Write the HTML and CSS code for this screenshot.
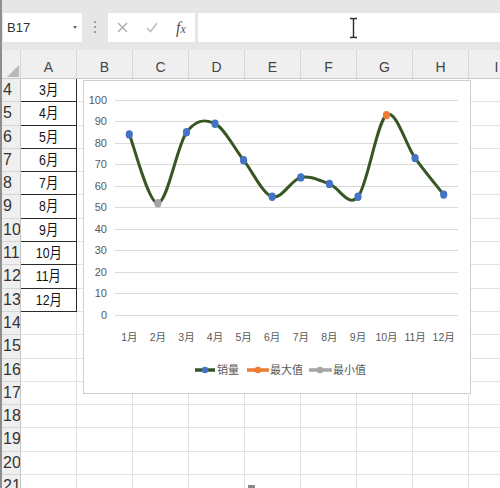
FILE: index.html
```html
<!DOCTYPE html>
<html lang="zh">
<head>
<meta charset="utf-8">
<title>Excel 折线图</title>
<link rel="stylesheet" href="styles.css">
</head>
<body>
<div class="app">
  <div class="toolbar">
    <div class="namebox"><span class="ref">B17</span><span class="dd"></span></div>
    <div class="grip"></div>
    <div class="fxbox">
      <svg class="ic-x" width="11" height="11" viewBox="0 0 11 11"><path d="M1 1 L10 10 M10 1 L1 10" stroke="#a9a9a9" stroke-width="1.3" fill="none"/></svg>
      <svg class="ic-ok" width="12" height="11" viewBox="0 0 12 11"><path d="M1 6 L4.5 9.5 L11 1" stroke="#bdbdbd" stroke-width="1.5" fill="none"/></svg>
      <span class="fx">f<span class="fxx">x</span></span>
    </div>
    <div class="formula">
      <svg class="ibeam" width="9" height="22" viewBox="0 0 9 22"><path d="M1 1.5 H3.5 Q4.5 1.5 4.5 3 V19 Q4.5 20.5 3.5 20.5 H1 M8 1.5 H5.5 Q4.5 1.5 4.5 3 M4.5 19 Q4.5 20.5 5.5 20.5 H8" stroke="#2b2b2b" stroke-width="1.4" fill="none"/></svg>
    </div>
  </div>

  <div class="colhead">
    <div class="corner"><svg class="tri" width="12" height="12" viewBox="0 0 12 12"><path d="M12 0 V12 H0 Z" fill="#b9b9b9"/></svg></div>
    <div class="ch">A</div><div class="ch">B</div><div class="ch">C</div><div class="ch">D</div><div class="ch">E</div><div class="ch">F</div><div class="ch">G</div><div class="ch">H</div><div class="ch">I</div>
  </div>

  <div class="sheet">
    <div class="row"><div class="rh">4</div><div class="c t"><span>3月</span></div><div class="c"></div><div class="c"></div><div class="c"></div><div class="c"></div><div class="c"></div><div class="c"></div><div class="c"></div><div class="c"></div></div>
    <div class="row"><div class="rh">5</div><div class="c t"><span>4月</span></div><div class="c"></div><div class="c"></div><div class="c"></div><div class="c"></div><div class="c"></div><div class="c"></div><div class="c"></div><div class="c"></div></div>
    <div class="row"><div class="rh">6</div><div class="c t"><span>5月</span></div><div class="c"></div><div class="c"></div><div class="c"></div><div class="c"></div><div class="c"></div><div class="c"></div><div class="c"></div><div class="c"></div></div>
    <div class="row"><div class="rh">7</div><div class="c t"><span>6月</span></div><div class="c"></div><div class="c"></div><div class="c"></div><div class="c"></div><div class="c"></div><div class="c"></div><div class="c"></div><div class="c"></div></div>
    <div class="row"><div class="rh">8</div><div class="c t"><span>7月</span></div><div class="c"></div><div class="c"></div><div class="c"></div><div class="c"></div><div class="c"></div><div class="c"></div><div class="c"></div><div class="c"></div></div>
    <div class="row"><div class="rh">9</div><div class="c t"><span>8月</span></div><div class="c"></div><div class="c"></div><div class="c"></div><div class="c"></div><div class="c"></div><div class="c"></div><div class="c"></div><div class="c"></div></div>
    <div class="row"><div class="rh">10</div><div class="c t"><span>9月</span></div><div class="c"></div><div class="c"></div><div class="c"></div><div class="c"></div><div class="c"></div><div class="c"></div><div class="c"></div><div class="c"></div></div>
    <div class="row"><div class="rh">11</div><div class="c t"><span>10月</span></div><div class="c"></div><div class="c"></div><div class="c"></div><div class="c"></div><div class="c"></div><div class="c"></div><div class="c"></div><div class="c"></div></div>
    <div class="row"><div class="rh">12</div><div class="c t"><span>11月</span></div><div class="c"></div><div class="c"></div><div class="c"></div><div class="c"></div><div class="c"></div><div class="c"></div><div class="c"></div><div class="c"></div></div>
    <div class="row"><div class="rh">13</div><div class="c t"><span>12月</span></div><div class="c"></div><div class="c"></div><div class="c"></div><div class="c"></div><div class="c"></div><div class="c"></div><div class="c"></div><div class="c"></div></div>
    <div class="row"><div class="rh">14</div><div class="c"></div><div class="c"></div><div class="c"></div><div class="c"></div><div class="c"></div><div class="c"></div><div class="c"></div><div class="c"></div><div class="c"></div></div>
    <div class="row"><div class="rh">15</div><div class="c"></div><div class="c"></div><div class="c"></div><div class="c"></div><div class="c"></div><div class="c"></div><div class="c"></div><div class="c"></div><div class="c"></div></div>
    <div class="row"><div class="rh">16</div><div class="c"></div><div class="c"></div><div class="c"></div><div class="c"></div><div class="c"></div><div class="c"></div><div class="c"></div><div class="c"></div><div class="c"></div></div>
    <div class="row"><div class="rh">17</div><div class="c"></div><div class="c"></div><div class="c"></div><div class="c"></div><div class="c"></div><div class="c"></div><div class="c"></div><div class="c"></div><div class="c"></div></div>
    <div class="row"><div class="rh">18</div><div class="c"></div><div class="c"></div><div class="c"></div><div class="c"></div><div class="c"></div><div class="c"></div><div class="c"></div><div class="c"></div><div class="c"></div></div>
    <div class="row"><div class="rh">19</div><div class="c"></div><div class="c"></div><div class="c"></div><div class="c"></div><div class="c"></div><div class="c"></div><div class="c"></div><div class="c"></div><div class="c"></div></div>
    <div class="row"><div class="rh">20</div><div class="c"></div><div class="c"></div><div class="c"></div><div class="c"></div><div class="c"></div><div class="c"></div><div class="c"></div><div class="c"></div><div class="c"></div></div>
    <div class="row"><div class="rh">21</div><div class="c"></div><div class="c"></div><div class="c"></div><div class="c"></div><div class="c"></div><div class="c"></div><div class="c"></div><div class="c"></div><div class="c"></div></div>
  </div>

  <div class="chart">
    <svg width="386" height="312" viewBox="82 81 386 312">
      <g class="grid">
        <line x1="113" x2="456" y1="100.5" y2="100.5"/>
        <line x1="113" x2="456" y1="121.5" y2="121.5"/>
        <line x1="113" x2="456" y1="143.5" y2="143.5"/>
        <line x1="113" x2="456" y1="164.5" y2="164.5"/>
        <line x1="113" x2="456" y1="186.5" y2="186.5"/>
        <line x1="113" x2="456" y1="207.5" y2="207.5"/>
        <line x1="113" x2="456" y1="229.5" y2="229.5"/>
        <line x1="113" x2="456" y1="250.5" y2="250.5"/>
        <line x1="113" x2="456" y1="272.5" y2="272.5"/>
        <line x1="113" x2="456" y1="293.5" y2="293.5"/>
        <line x1="113" x2="456" y1="315.5" y2="315.5"/>
      </g>
      <g class="ylab">
        <text x="105" y="104">100</text>
        <text x="105" y="125">90</text>
        <text x="105" y="147">80</text>
        <text x="105" y="168">70</text>
        <text x="105" y="190">60</text>
        <text x="105" y="211">50</text>
        <text x="105" y="233">40</text>
        <text x="105" y="254">30</text>
        <text x="105" y="276">20</text>
        <text x="105" y="297">10</text>
        <text x="105" y="319">0</text>
      </g>
      <g class="xlab">
        <text x="127.3" y="341">1月</text>
        <text x="155.9" y="341">2月</text>
        <text x="184.5" y="341">3月</text>
        <text x="213.0" y="341">4月</text>
        <text x="241.6" y="341">5月</text>
        <text x="270.2" y="341">6月</text>
        <text x="298.8" y="341">7月</text>
        <text x="327.4" y="341">8月</text>
        <text x="356.0" y="341">9月</text>
        <text x="384.5" y="341">10月</text>
        <text x="413.1" y="341">11月</text>
        <text x="441.7" y="341">12月</text>
      </g>
      <path class="curve" d="M127.3,134.4 C132.1,145.9 146.4,203.6 155.9,203.2 C165.4,202.8 175.0,145.6 184.5,132.3 C194.0,119.0 203.5,119.0 213.0,123.7 C222.5,128.4 232.1,148.0 241.6,160.2 C251.1,172.4 260.7,193.9 270.2,196.8 C279.7,199.7 289.3,179.6 298.8,177.4 C308.3,175.2 317.9,180.7 327.4,183.9 C336.9,187.1 346.5,208.3 356.0,196.8 C365.5,185.3 375.0,121.6 384.5,115.1 C394.0,108.6 403.6,144.8 413.1,158.1 C422.6,171.4 436.9,188.5 441.7,194.6"/>
      <g class="mk-blue">
        <ellipse cx="127.3" cy="134.4" rx="3.6" ry="4.2"/>
        <ellipse cx="184.5" cy="132.3" rx="3.6" ry="4.2"/>
        <ellipse cx="213.0" cy="123.7" rx="3.6" ry="4.2"/>
        <ellipse cx="241.6" cy="160.2" rx="3.6" ry="4.2"/>
        <ellipse cx="270.2" cy="196.8" rx="3.6" ry="4.2"/>
        <ellipse cx="298.8" cy="177.4" rx="3.6" ry="4.2"/>
        <ellipse cx="327.4" cy="183.9" rx="3.6" ry="4.2"/>
        <ellipse cx="356.0" cy="196.8" rx="3.6" ry="4.2"/>
        <ellipse cx="413.1" cy="158.1" rx="3.6" ry="4.2"/>
        <ellipse cx="441.7" cy="194.6" rx="3.6" ry="4.2"/>
      </g>
      <ellipse class="mk-gray" cx="155.9" cy="203.2" rx="3.6" ry="4.2"/>
      <ellipse class="mk-orange" cx="384.5" cy="115.1" rx="3.6" ry="4.2"/>
      <g class="legend">
        <line x1="193" x2="213" y1="370" y2="370" stroke="#375623"/>
        <circle cx="203" cy="370" r="3.3" fill="#4472c4"/>
        <text x="215" y="374">销量</text>
        <line x1="245" x2="267" y1="370" y2="370" stroke="#ed7d31"/>
        <circle cx="256" cy="370" r="3.3" fill="#ed7d31"/>
        <text x="268" y="374">最大值</text>
        <line x1="307" x2="330" y1="370" y2="370" stroke="#a5a5a5"/>
        <circle cx="318" cy="370" r="3.3" fill="#a5a5a5"/>
        <text x="331" y="374">最小值</text>
      </g>
    </svg>
  </div>
  <div class="hscroll"></div>
</div>
</body>
</html>
```

FILE: styles.css
```css
html, body {
  margin: 0;
  padding: 0;
}
body {
  width: 500px;
  height: 488px;
  overflow: hidden;
  background: #ffffff;
  font-family: "Liberation Sans", "Noto Sans CJK SC", sans-serif;
}
.app {
  position: relative;
  height: 488px;
  border-left: 2px solid #8e8e8e;
  overflow: hidden;
}

/* formula bar */
.toolbar {
  height: 50px;
  box-sizing: border-box;
  padding-top: 13px;
  background: #e6e6e6;
  display: flex;
  align-items: flex-start;
}
.namebox {
  margin-left: 1px;
  width: 79px;
  height: 29px;
  box-sizing: border-box;
  background: #ffffff;
  display: flex;
  align-items: center;
  padding-left: 4px;
  font-size: 13px;
  color: #333333;
}
.dd {
  margin-left: auto;
  margin-right: 5px;
  width: 0;
  height: 0;
  border-left: 2.5px solid transparent;
  border-right: 2.5px solid transparent;
  border-top: 3px solid #666666;
}
.grip {
  width: 2px;
  height: 13px;
  margin: 8px 12px 0 12px;
  background: repeating-linear-gradient(#9d9d9d 0 2px, transparent 2px 5px);
}
.fxbox {
  width: 87px;
  height: 29px;
  background: #ffffff;
  display: flex;
  align-items: center;
}
.ic-x {
  margin-left: 9px;
}
.ic-ok {
  margin-left: 18px;
}
.fx {
  margin-left: 18px;
  font-family: "Liberation Serif", serif;
  font-style: italic;
  font-size: 16px;
  color: #555555;
  line-height: 1;
}
.fxx {
  font-size: 12px;
}
.formula {
  position: relative;
  flex: 1;
  margin-left: 3px;
  height: 29px;
  background: #ffffff;
}
.ibeam {
  position: absolute;
  left: 151px;
  top: 4px;
}

/* column headers */
.colhead {
  display: grid;
  grid-template-columns: 19px repeat(9, 56px);
  height: 29px;
  box-sizing: border-box;
  background: #efefef;
  border-bottom: 1px solid #c9c9c9;
}
.corner {
  position: relative;
  border-right: 1px solid #d6d6d6;
}
.tri {
  position: absolute;
  right: 1px;
  bottom: 2px;
}
.ch {
  box-sizing: border-box;
  border-right: 1px solid #d6d6d6;
  text-align: center;
  font-size: 14px;
  color: #444444;
  padding-top: 6px;
  line-height: 23px;
}

/* cells */
.row {
  display: grid;
  grid-template-columns: 19px repeat(9, 56px);
  height: 23.3px;
}
.rh {
  box-sizing: border-box;
  background: #efefef;
  border-right: 1px solid #c4c4c4;
  border-bottom: 1px solid #d6d6d6;
  padding-left: 1px;
  font-size: 16px;
  color: #333333;
  line-height: 22px;
  white-space: nowrap;
  overflow: hidden;
}
.c {
  box-sizing: border-box;
  border-right: 1px solid #e2e2e2;
  border-bottom: 1px solid #e2e2e2;
}
.t {
  border-right: 1px solid #2a2a2a;
  border-bottom: 1px solid #2a2a2a;
  text-align: center;
  line-height: 22px;
}
.t span {
  display: inline-block;
  font-size: 15px;
  color: #111111;
  transform: scaleX(0.82);
}

/* chart */
.chart {
  position: absolute;
  left: 81px;
  top: 80px;
  width: 388px;
  height: 314px;
  box-sizing: border-box;
  border: 1px solid #cfcfcf;
  background: #ffffff;
}
.chart svg {
  display: block;
}
.grid line {
  stroke: #d9d9d9;
  stroke-width: 1.2;
}
.ylab text {
  font-family: "Liberation Sans", sans-serif;
  font-size: 11px;
  fill: #595959;
  text-anchor: end;
}
.xlab text {
  font-family: "Liberation Sans", "Noto Sans CJK SC", sans-serif;
  font-size: 10.5px;
  fill: #595959;
  text-anchor: middle;
}
.curve {
  fill: none;
  stroke: #375623;
  stroke-width: 3;
  stroke-linecap: round;
}
.mk-blue ellipse {
  fill: #4472c4;
}
.mk-gray {
  fill: #a5a5a5;
}
.mk-orange {
  fill: #ed7d31;
}
.legend line {
  stroke-width: 3.5;
}
.legend text {
  font-family: "Noto Sans CJK SC", sans-serif;
  font-size: 11px;
  fill: #595959;
}
.hscroll {
  position: absolute;
  left: 246px;
  bottom: 0;
  width: 7px;
  height: 3px;
  background: #8a8a8a;
}
```
